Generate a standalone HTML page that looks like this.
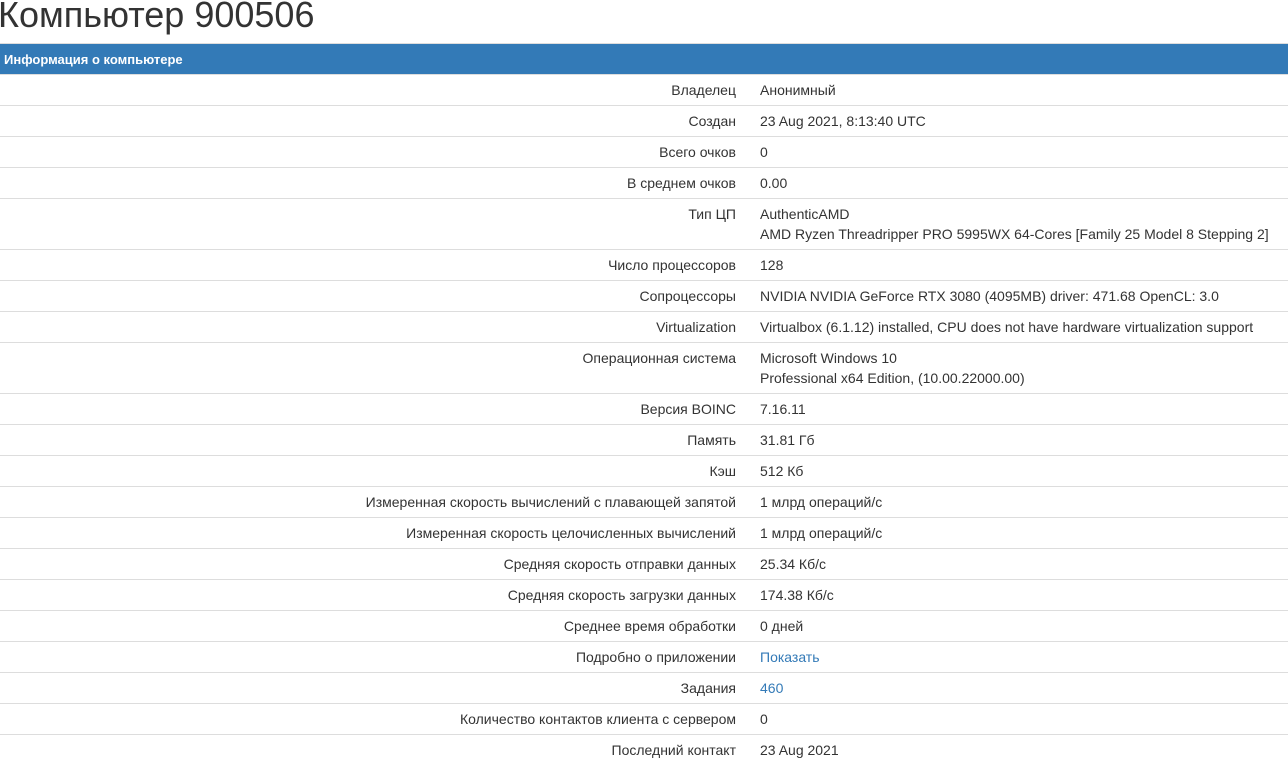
<!DOCTYPE html>
<html><head><meta charset="utf-8"><style>
body{margin:0;background:#fff;font-family:"Liberation Sans",Arial,sans-serif;color:#333;width:1288px;height:776px;overflow:hidden;position:relative}
h1{position:absolute;left:-2px;top:-3px;margin:0;font-size:36px;line-height:36px;font-weight:normal;color:#333}
table{position:absolute;left:0;top:43px;width:1288px;border-collapse:collapse;font-size:14px}
th{background:#337ab7;color:#fff;font-size:13px;font-weight:bold;text-align:left;height:31px;padding:0 4px;border-top:1px solid #ddd;box-sizing:border-box}
td{padding:5px 8px;line-height:20px;border-top:1px solid #ddd;vertical-align:top}
td.l{text-align:right;width:728px;padding-right:16px}
td.v{padding-left:8px}
a{color:#337ab7;text-decoration:none}
</style></head><body>
<h1>Компьютер 900506</h1>
<table>
<tr><th colspan="2">Информация о компьютере</th></tr>
<tr><td class="l">Владелец</td><td class="v">Анонимный</td></tr>
<tr><td class="l">Создан</td><td class="v">23 Aug 2021, 8:13:40 UTC</td></tr>
<tr><td class="l">Всего очков</td><td class="v">0</td></tr>
<tr><td class="l">В среднем очков</td><td class="v">0.00</td></tr>
<tr><td class="l">Тип ЦП</td><td class="v">AuthenticAMD<br>AMD Ryzen Threadripper PRO 5995WX 64-Cores [Family 25 Model 8 Stepping 2]</td></tr>
<tr><td class="l">Число процессоров</td><td class="v">128</td></tr>
<tr><td class="l">Сопроцессоры</td><td class="v">NVIDIA NVIDIA GeForce RTX 3080 (4095MB) driver: 471.68 OpenCL: 3.0</td></tr>
<tr><td class="l">Virtualization</td><td class="v">Virtualbox (6.1.12) installed, CPU does not have hardware virtualization support</td></tr>
<tr><td class="l">Операционная система</td><td class="v">Microsoft Windows 10<br>Professional x64 Edition, (10.00.22000.00)</td></tr>
<tr><td class="l">Версия BOINC</td><td class="v">7.16.11</td></tr>
<tr><td class="l">Память</td><td class="v">31.81 Гб</td></tr>
<tr><td class="l">Кэш</td><td class="v">512 Кб</td></tr>
<tr><td class="l">Измеренная скорость вычислений с плавающей запятой</td><td class="v">1 млрд операций/с</td></tr>
<tr><td class="l">Измеренная скорость целочисленных вычислений</td><td class="v">1 млрд операций/с</td></tr>
<tr><td class="l">Средняя скорость отправки данных</td><td class="v">25.34 Кб/с</td></tr>
<tr><td class="l">Средняя скорость загрузки данных</td><td class="v">174.38 Кб/с</td></tr>
<tr><td class="l">Среднее время обработки</td><td class="v">0 дней</td></tr>
<tr><td class="l">Подробно о приложении</td><td class="v"><a>Показать</a></td></tr>
<tr><td class="l">Задания</td><td class="v"><a>460</a></td></tr>
<tr><td class="l">Количество контактов клиента с сервером</td><td class="v">0</td></tr>
<tr><td class="l">Последний контакт</td><td class="v">23 Aug 2021</td></tr>
</table>
</body></html>
